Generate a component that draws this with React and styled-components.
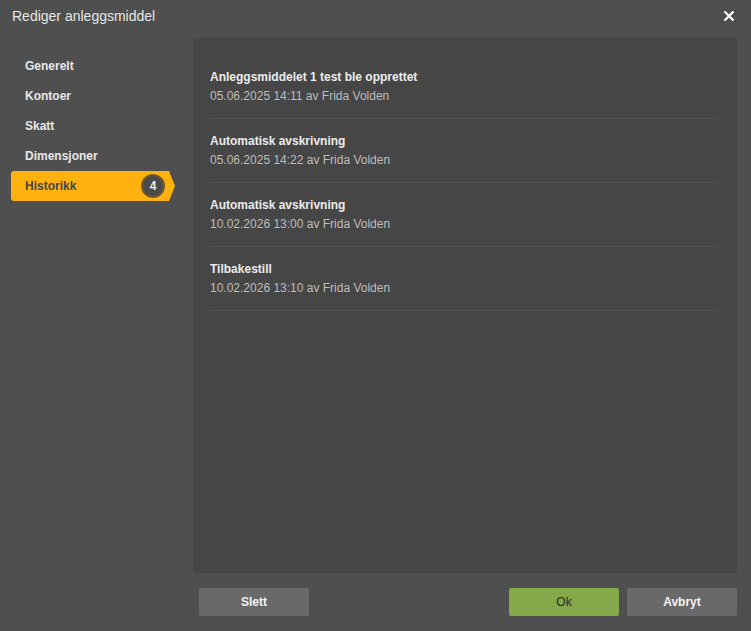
import React from 'react';
import styled, { createGlobalStyle } from 'styled-components';

const GlobalStyle = createGlobalStyle`
  html, body {
    margin: 0;
    padding: 0;
    background: #4f4f4f;
    font-family: "Liberation Sans", Arial, sans-serif;
  }
`;

const Dialog = styled.div`
  width: 751px;
  height: 631px;
  background: #4f4f4f;
  display: flex;
  flex-direction: column;
  box-sizing: border-box;
`;

const Header = styled.div`
  height: 32px;
  display: flex;
  align-items: center;
  justify-content: space-between;
  padding: 0 17px 0 12px;
  flex-shrink: 0;
`;

const Title = styled.div`
  color: #e6e6e6;
  font-size: 14px;
`;

const Close = styled.button`
  background: none;
  border: 0;
  padding: 0;
  width: 10px;
  height: 10px;
  display: flex;
  cursor: pointer;
`;

const Body = styled.div`
  flex: 1;
  display: flex;
  padding: 6px 14px 0 11px;
  min-height: 0;
`;

const Sidebar = styled.nav`
  width: 182px;
  flex-shrink: 0;
  padding-top: 13px;
  display: flex;
  flex-direction: column;
`;

const NavItem = styled.div`
  height: 30px;
  width: 164px;
  display: flex;
  align-items: center;
  justify-content: space-between;
  padding: 0 10px 0 14px;
  box-sizing: border-box;
  font-size: 12px;
  font-weight: bold;
  color: ${p => (p.$active ? '#444' : '#e8e8e8')};
  background: ${p => (p.$active ? '#ffb20f' : 'transparent')};
  border-radius: 3px 0 0 3px;
  clip-path: ${p =>
    p.$active ? 'polygon(0 0, 158px 0, 164px 50%, 158px 100%, 0 100%)' : 'none'};
`;

const Badge = styled.span`
  width: 20px;
  height: 20px;
  border-radius: 50%;
  background: #4a4a4a;
  border: 2px solid #6e5a2c;
  color: #f2f2f2;
  font-size: 12px;
  font-weight: bold;
  display: flex;
  align-items: center;
  justify-content: center;
`;

const Main = styled.div`
  flex: 1;
  display: flex;
  flex-direction: column;
  min-width: 0;
`;

const Panel = styled.div`
  height: 535px;
  background: #464646;
  border-radius: 2px;
  padding: 17px 18px 0 17px;
  box-sizing: border-box;
`;

const Entry = styled.div`
  padding: 13px 0 13px;
  border-bottom: 1px solid #535353;
`;

const EntryTitle = styled.div`
  font-size: 12px;
  font-weight: bold;
  line-height: 18px;
  color: #ececec;
`;

const EntryMeta = styled.div`
  margin-top: 1px;
  font-size: 12px;
  line-height: 18px;
  color: #bdbdbd;
`;

const Footer = styled.div`
  display: flex;
  align-items: center;
  gap: 8px;
  padding: 15px 0 0 6px;
`;

const Spacer = styled.div`
  flex: 1;
`;

const Button = styled.button`
  width: 110px;
  height: 28px;
  border: 0;
  border-radius: 2px;
  font-family: inherit;
  font-size: 12px;
  font-weight: ${p => (p.$primary ? 'normal' : 'bold')};
  color: ${p => (p.$primary ? '#2a2a2a' : '#f4f4f4')};
  background: ${p => (p.$primary ? '#84a84a' : '#696969')};
  cursor: pointer;
`;

const nav = ['Generelt', 'Kontoer', 'Skatt', 'Dimensjoner'];

const history = [
  { title: 'Anleggsmiddelet 1 test ble opprettet', meta: '05.06.2025 14:11 av Frida Volden' },
  { title: 'Automatisk avskrivning', meta: '05.06.2025 14:22 av Frida Volden' },
  { title: 'Automatisk avskrivning', meta: '10.02.2026 13:00 av Frida Volden' },
  { title: 'Tilbakestill', meta: '10.02.2026 13:10 av Frida Volden' },
];

export default function App() {
  return (
    <>
      <GlobalStyle />
      <Dialog>
        <Header>
          <Title>Rediger anleggsmiddel</Title>
          <Close aria-label="Lukk">
            <svg width="10" height="10" viewBox="0 0 10 10">
              <path d="M1.2 1.2 L8.8 8.8 M8.8 1.2 L1.2 8.8" stroke="#fff" strokeWidth="2.2" strokeLinecap="square" />
            </svg>
          </Close>
        </Header>
        <Body>
          <Sidebar>
            {nav.map(n => (
              <NavItem key={n}>{n}</NavItem>
            ))}
            <NavItem $active>
              Historikk
              <Badge>4</Badge>
            </NavItem>
          </Sidebar>
          <Main>
            <Panel>
              {history.map((h, i) => (
                <Entry key={i}>
                  <EntryTitle>{h.title}</EntryTitle>
                  <EntryMeta>{h.meta}</EntryMeta>
                </Entry>
              ))}
            </Panel>
            <Footer>
              <Button>Slett</Button>
              <Spacer />
              <Button $primary>Ok</Button>
              <Button>Avbryt</Button>
            </Footer>
          </Main>
        </Body>
      </Dialog>
    </>
  );
}
